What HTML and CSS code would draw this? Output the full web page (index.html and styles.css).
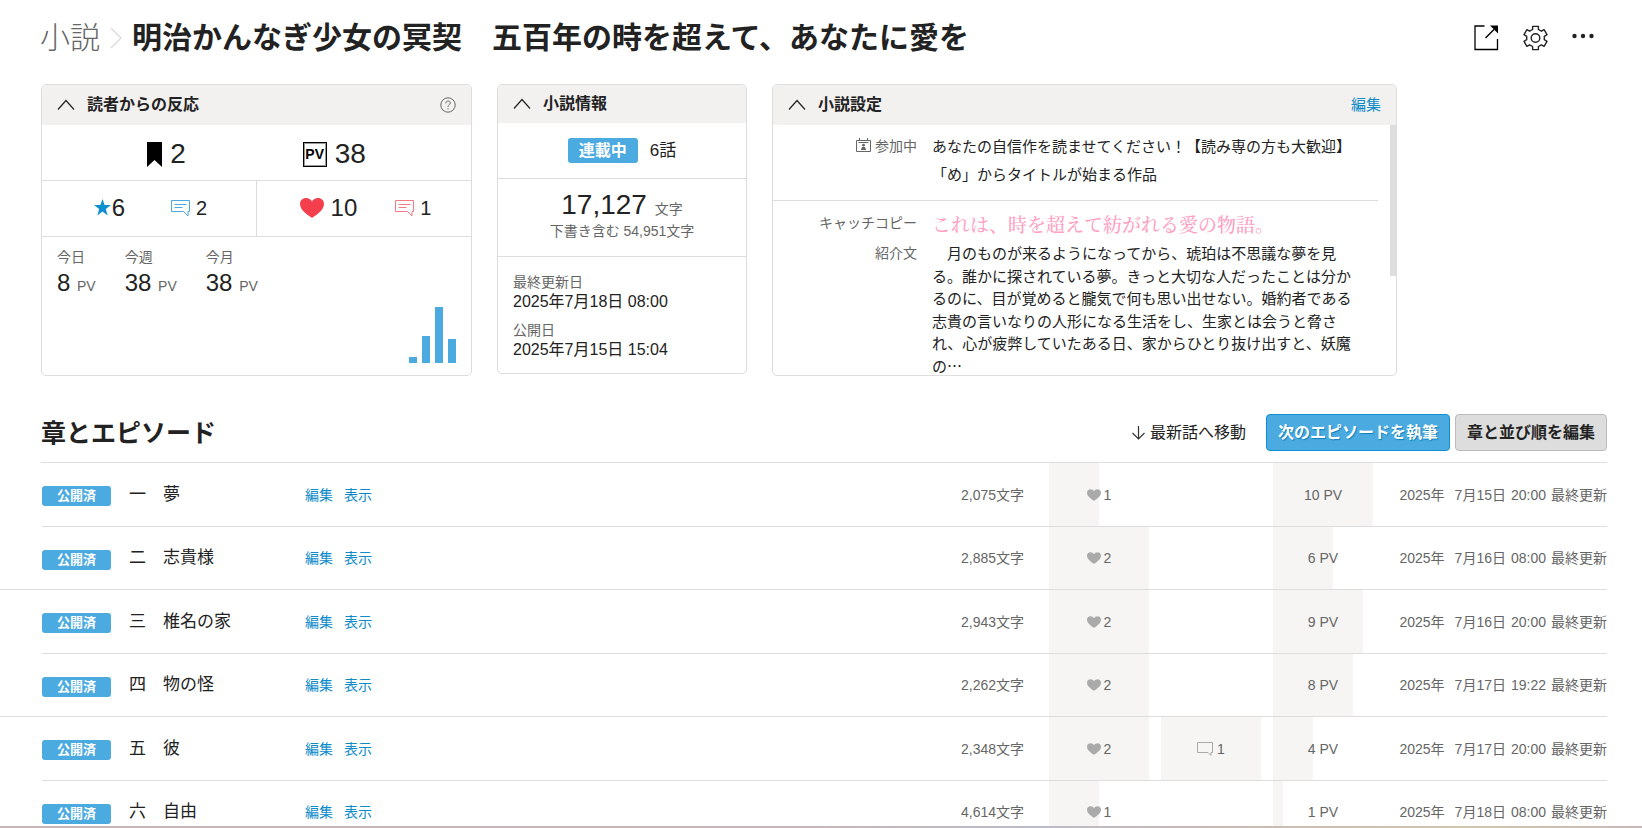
FILE: index.html
```html
<!DOCTYPE html>
<html lang="ja">
<head>
    <meta charset="UTF-8">
    <meta name="viewport" content="width=device-width, initial-scale=1.0">
    <title>明治かんなぎ少女の冥契　五百年の時を超えて、あなたに愛を</title>
    <link rel="stylesheet" href="styles.css">
</head>
<body>
    <svg class="sprite" aria-hidden="true">
        <symbol id="icon-up" viewBox="0 0 18 12">
            <path d="M1 10.5 9 1.5l8 9" fill="none" stroke="currentColor" stroke-width="1.2"/>
        </symbol>
        <symbol id="icon-comment" viewBox="0 0 20 18">
            <path d="M.5 1.5h18v11H17V17l-4.500-4.500H.5z" fill="none" stroke="currentColor"/>
            <path d="M3.500 5.500h12M3.500 8.500h8" stroke="currentColor"/>
        </symbol>
        <symbol id="icon-heart" viewBox="0 0 24 20">
            <path d="M12 20C8 17 0 12.500 0 6c0-3.500 2.500-6 6-6 2.500 0 5 1.200 6 3.500C13 1.200 15.500 0 18 0c3.500 0 6 2.500 6 6 0 6.500-8 11-12 14z" fill="currentColor"/>
        </symbol>
    </svg>

    <div class="page">
        <header class="page-header">
            <nav class="breadcrumb">
                <a class="breadcrumb-parent" href="#">小説</a>
                <svg class="breadcrumb-arrow" viewBox="0 0 12 22"><path d="M1 1l10 10L1 21" fill="none" stroke="currentColor" stroke-width="1.500"/></svg>
                <h1 class="work-title">明治かんなぎ少女の冥契　五百年の時を超えて、あなたに愛を</h1>
            </nav>
            <div class="header-actions">
                <button class="icon-button" type="button" aria-label="作品ページを開く">
                    <svg width="25" height="26" viewBox="0 0 25 26">
                        <path d="M10.500 1H1v23.500h22.500V14" fill="none" stroke="#000" stroke-width="1.300"/>
                        <path d="M11.500 13 20 4.500" stroke="#000" stroke-width="1.500"/>
                        <path d="M16 .5h8V8.500z" fill="#000"/>
                    </svg>
                </button>
                <button class="icon-button" type="button" aria-label="設定">
                    <svg width="25" height="26" viewBox="0 0 25 26" fill="none" stroke="#222" stroke-width="1.400">
                        <path d="M9.600 4.500V1.400h5.800v3.100l3 1.700 2.700-1.500 2.900 5-2.700 1.600v3.400l2.700 1.600-2.900 5-2.700-1.500-3 1.700v3.100H9.600v-3.100l-3-1.700-2.700 1.500-2.900-5 2.700-1.600v-3.400L1 9.700l2.900-5 2.700 1.500z" stroke-linejoin="round"/>
                        <circle cx="12.500" cy="13" r="4.300"/>
                    </svg>
                </button>
                <button class="icon-button" type="button" aria-label="メニュー">
                    <svg width="22" height="26" viewBox="0 0 22 26" fill="#222">
                        <circle cx="2.500" cy="11" r="2.200"/><circle cx="11" cy="11" r="2.200"/><circle cx="19.500" cy="11" r="2.200"/>
                    </svg>
                </button>
            </div>
        </header>

        <div class="cards">
            <section class="card card-reaction">
                <div class="card-header">
                    <svg class="card-toggle"><use href="#icon-up"/></svg>
                    <h2 class="card-title">読者からの反応</h2>
                    <svg class="help-icon" viewBox="0 0 16 16" fill="none" stroke="#666">
                        <circle cx="8" cy="8" r="7.200"/>
                        <path d="M5.800 6.300c0-3 4.500-3 4.500-.3 0 1.700-2.300 1.800-2.300 3.800M8 11.200v1.200"/>
                    </svg>
                </div>
                <div class="reaction-total">
                    <div class="stat stat-large">
                        <svg width="15" height="25" viewBox="0 0 15 25"><path d="M0 0h15v25l-7.500-7L0 25z"/></svg>
                        <span>2</span>
                    </div>
                    <div class="stat stat-large">
                        <span class="pv-icon">PV</span>
                        <span>38</span>
                    </div>
                </div>
                <div class="reaction-detail">
                    <div class="reaction-half">
                        <div class="stat stat-medium stat-star">
                            <svg width="17" height="17" viewBox="0 0 17 17"><path d="M8.500 0l2.100 6H17l-5.200 4 1.900 6.500-5.200-3.900-5.200 3.900L5.200 10 0 6h6.400z" fill="#0d90d0"/></svg>
                            <span>6</span>
                        </div>
                        <div class="stat stat-small">
                            <svg class="comment-blue" width="20" height="18"><use href="#icon-comment"/></svg>
                            <span>2</span>
                        </div>
                    </div>
                    <div class="reaction-half">
                        <div class="stat stat-medium">
                            <svg class="heart-red" width="24" height="20"><use href="#icon-heart"/></svg>
                            <span>10</span>
                        </div>
                        <div class="stat stat-small">
                            <svg class="comment-red" width="20" height="18"><use href="#icon-comment"/></svg>
                            <span>1</span>
                        </div>
                    </div>
                </div>
                <div class="reaction-pv">
                    <dl class="pv-list">
                        <div><dt>今日</dt><dd>8 <small>PV</small></dd></div>
                        <div><dt>今週</dt><dd>38 <small>PV</small></dd></div>
                        <div><dt>今月</dt><dd>38 <small>PV</small></dd></div>
                    </dl>
                    <div class="pv-chart">
                        <div style="height: 6px"></div>
                        <div style="height: 27px"></div>
                        <div style="height: 56px"></div>
                        <div style="height: 24px"></div>
                    </div>
                </div>
            </section>

            <section class="card card-info">
                <div class="card-header">
                    <svg class="card-toggle"><use href="#icon-up"/></svg>
                    <h2 class="card-title">小説情報</h2>
                </div>
                <div class="info-status">
                    <span class="status-badge">連載中</span>
                    <span>6話</span>
                </div>
                <div class="info-count">
                    <p class="count-main">17,127 <small>文字</small></p>
                    <p class="count-sub">下書き含む 54,951文字</p>
                </div>
                <dl class="info-dates">
                    <dt>最終更新日</dt>
                    <dd>2025年7月18日 08:00</dd>
                    <dt>公開日</dt>
                    <dd>2025年7月15日 15:04</dd>
                </dl>
            </section>

            <section class="card card-settings">
                <div class="card-header">
                    <svg class="card-toggle"><use href="#icon-up"/></svg>
                    <h2 class="card-title">小説設定</h2>
                    <a class="card-edit" href="#">編集</a>
                </div>
                <div class="settings-body">
                    <dl class="settings-group">
                        <dt>
                            <svg width="15" height="14" viewBox="0 0 15 14" fill="none" stroke="#666">
                                <path d="M.5 2.500h14v11H.5zM3.500 0v2.500M11.500 0v2.500M2.500 4.500h10"/>
                                <circle cx="7.500" cy="7.200" r="1.400" fill="#666" stroke="none"/>
                                <path d="M5 12c0-4.500 5-4.500 5 0z" fill="#666" stroke="none"/>
                            </svg>
                            参加中
                        </dt>
                        <dd class="contests">
                            <p>あなたの自信作を読ませてください！【読み専の方も大歓迎】</p>
                            <p>「め」からタイトルが始まる作品</p>
                        </dd>
                    </dl>
                    <dl class="settings-group settings-text">
                        <dt>キャッチコピー</dt>
                        <dd class="catchphrase">これは、時を超えて紡がれる愛の物語。</dd>
                        <dt>紹介文</dt>
                        <dd class="introduction">　月のものが来るようになってから、琥珀は不思議な夢を見る。誰かに探されている夢。きっと大切な人だったことは分かるのに、目が覚めると朧気で何も思い出せない。婚約者である志貴の言いなりの人形になる生活をし、生家とは会うと脅され、心が疲弊していたある日、家からひとり抜け出すと、妖魔の…</dd>
                    </dl>
                    <div class="scroll-thumb"></div>
                </div>
            </section>
        </div>

        <section class="episodes">
            <div class="episodes-header">
                <h2 class="episodes-title">章とエピソード</h2>
                <a class="jump-link" href="#latest">
                    <svg width="13" height="14" viewBox="0 0 13 14" fill="none" stroke="#333" stroke-width="1.200"><path d="M6.500 0v13M.5 7l6 6 6-6"/></svg>
                    最新話へ移動
                </a>
                <button class="button button-primary" type="button">次のエピソードを執筆</button>
                <button class="button" type="button">章と並び順を編集</button>
            </div>
            <ol class="episode-list">
                <li class="episode">
                    <span class="episode-status">公開済</span>
                    <span class="episode-title">一　夢</span>
                    <a href="#">編集</a>
                    <a href="#">表示</a>
                    <span class="episode-length">2,075文字</span>
                    <span class="meter"><i style="width: 50%"></i><svg class="heart-gray"><use href="#icon-heart"/></svg>1</span>
                    <span class="meter"></span>
                    <span class="meter"><i style="width: 100%"></i>10 PV</span>
                    <time class="episode-date"><span class="year">2025年</span><span>7月15日</span><span>20:00</span><span>最終更新</span></time>
                </li>
                <li class="episode">
                    <span class="episode-status">公開済</span>
                    <span class="episode-title">二　志貴様</span>
                    <a href="#">編集</a>
                    <a href="#">表示</a>
                    <span class="episode-length">2,885文字</span>
                    <span class="meter"><i style="width: 100%"></i><svg class="heart-gray"><use href="#icon-heart"/></svg>2</span>
                    <span class="meter"></span>
                    <span class="meter"><i style="width: 60%"></i>6 PV</span>
                    <time class="episode-date"><span class="year">2025年</span><span>7月16日</span><span>08:00</span><span>最終更新</span></time>
                </li>
                <li class="episode">
                    <span class="episode-status">公開済</span>
                    <span class="episode-title">三　椎名の家</span>
                    <a href="#">編集</a>
                    <a href="#">表示</a>
                    <span class="episode-length">2,943文字</span>
                    <span class="meter"><i style="width: 100%"></i><svg class="heart-gray"><use href="#icon-heart"/></svg>2</span>
                    <span class="meter"></span>
                    <span class="meter"><i style="width: 90%"></i>9 PV</span>
                    <time class="episode-date"><span class="year">2025年</span><span>7月16日</span><span>20:00</span><span>最終更新</span></time>
                </li>
                <li class="episode">
                    <span class="episode-status">公開済</span>
                    <span class="episode-title">四　物の怪</span>
                    <a href="#">編集</a>
                    <a href="#">表示</a>
                    <span class="episode-length">2,262文字</span>
                    <span class="meter"><i style="width: 100%"></i><svg class="heart-gray"><use href="#icon-heart"/></svg>2</span>
                    <span class="meter"></span>
                    <span class="meter"><i style="width: 80%"></i>8 PV</span>
                    <time class="episode-date"><span class="year">2025年</span><span>7月17日</span><span>19:22</span><span>最終更新</span></time>
                </li>
                <li class="episode">
                    <span class="episode-status">公開済</span>
                    <span class="episode-title">五　彼</span>
                    <a href="#">編集</a>
                    <a href="#">表示</a>
                    <span class="episode-length">2,348文字</span>
                    <span class="meter"><i style="width: 100%"></i><svg class="heart-gray"><use href="#icon-heart"/></svg>2</span>
                    <span class="meter"><i style="width: 100%"></i><svg class="comment-gray" viewBox="0 0 17 14"><path d="M.5.500h15v10H14v3L11 10.500H.5z" fill="none" stroke="currentColor"/></svg>1</span>
                    <span class="meter"><i style="width: 40%"></i>4 PV</span>
                    <time class="episode-date"><span class="year">2025年</span><span>7月17日</span><span>20:00</span><span>最終更新</span></time>
                </li>
                <li class="episode" id="latest">
                    <span class="episode-status">公開済</span>
                    <span class="episode-title">六　自由</span>
                    <a href="#">編集</a>
                    <a href="#">表示</a>
                    <span class="episode-length">4,614文字</span>
                    <span class="meter"><i style="width: 50%"></i><svg class="heart-gray"><use href="#icon-heart"/></svg>1</span>
                    <span class="meter"></span>
                    <span class="meter"><i style="width: 10%"></i>1 PV</span>
                    <time class="episode-date"><span class="year">2025年</span><span>7月18日</span><span>08:00</span><span>最終更新</span></time>
                </li>
            </ol>
        </section>
    </div>
    <div class="bottom-edge"></div>
</body>
</html>
```
FILE: styles.css
```css
* {
    margin: 0;
    padding: 0;
    box-sizing: border-box;
}

body {
    display: flex;
    flex-direction: column;
    height: 100vh;
    overflow: hidden;
    font-family: "Liberation Sans", "Noto Sans CJK JP", sans-serif;
    font-size: 16px;
    line-height: 20px;
    color: #222;
    background: #fff;
}

a {
    color: #0d8bc9;
    text-decoration: none;
}

button {
    font: inherit;
    cursor: pointer;
}

svg {
    display: block;
    flex-shrink: 0;
}

.sprite {
    position: absolute;
    width: 0;
    height: 0;
}

.page {
    flex: 1;
    min-height: 0;
    overflow: hidden;
}

/* Header */
.page-header {
    display: flex;
    justify-content: space-between;
    align-items: flex-start;
    padding: 18px 48px 26px 40px;
}

.breadcrumb {
    display: flex;
    align-items: center;
    font-size: 30px;
    line-height: 40px;
}

.breadcrumb-parent {
    color: #666;
    font-weight: 300;
}

.breadcrumb-arrow {
    width: 12px;
    height: 22px;
    margin: 0 10px;
    color: #ddd;
}

.work-title {
    font-size: 30px;
    font-weight: bold;
}

.header-actions {
    display: flex;
    gap: 24px;
    padding-top: 7px;
}

.icon-button {
    border: none;
    background: none;
}

/* Cards */
.cards {
    display: flex;
    align-items: flex-start;
    gap: 25px;
    padding-left: 41px;
}

.card {
    border: 1px solid #ddd;
    border-radius: 5px;
    overflow: hidden;
}

.card-reaction {
    width: 431px;
}

.card-info {
    width: 250px;
}

.card-settings {
    width: 625px;
}

.card-header {
    display: flex;
    align-items: center;
    height: 40px;
    padding: 0 15px;
    background: #f2f1f0;
}

.card-info .card-header {
    height: 38px;
}

.card-toggle {
    width: 18px;
    height: 12px;
    margin-right: 12px;
}

.card-title {
    flex: 1;
    font-size: 16px;
}

.card-edit {
    font-size: 15px;
}

.help-icon {
    width: 16px;
    height: 16px;
}

.stat {
    display: flex;
    align-items: center;
}

.stat-large {
    gap: 8px;
    font-size: 28px;
}

.stat-medium {
    gap: 7px;
    font-size: 24px;
}

.stat-small {
    gap: 5px;
    font-size: 20px;
}

.stat-star {
    gap: 1px;
}

.pv-icon {
    width: 24px;
    height: 25px;
    border: 1px solid #000;
    box-shadow: inset 0 0 0 1px #999;
    font-size: 14px;
    font-weight: bold;
    line-height: 23px;
    text-align: center;
    color: #000;
}

.comment-blue {
    color: #4baae0;
}

.comment-red {
    color: #f77a80;
}

.heart-red {
    color: #f4404c;
}

.reaction-total {
    display: flex;
    justify-content: center;
    align-items: center;
    gap: 117px;
    height: 56px;
    padding-top: 3px;
    border-bottom: 1px solid #ddd;
}

.reaction-detail {
    display: flex;
    height: 56px;
    border-bottom: 1px solid #ddd;
}

.reaction-half {
    flex: 1;
    display: flex;
    justify-content: center;
    align-items: center;
    gap: 46px;
    padding: 0 0 2px 3px;
}

.reaction-half + .reaction-half {
    gap: 38px;
    border-left: 1px solid #ddd;
}

.reaction-pv {
    padding: 10px 15px 12px;
}

.pv-list {
    display: flex;
    gap: 29px;
}

.pv-list dt {
    font-size: 14px;
    color: #666;
}

.pv-list dd {
    font-size: 24px;
    line-height: 32px;
}

.pv-list small {
    font-size: 14px;
    line-height: 14px;
    color: #666;
}

.pv-chart {
    display: flex;
    justify-content: flex-end;
    align-items: flex-end;
    gap: 5px;
    height: 64px;
}

.pv-chart div {
    width: 8px;
    background: #4baae0;
}

.info-status {
    display: flex;
    justify-content: center;
    align-items: center;
    gap: 12px;
    height: 56px;
    border-bottom: 1px solid #ddd;
    font-size: 17px;
}

.status-badge {
    padding: 0 11px;
    border-radius: 3px;
    font-size: 16px;
    font-weight: bold;
    line-height: 25px;
    color: #fff;
    background: #4baae0;
}

.info-count {
    padding: 10px 0 15px;
    border-bottom: 1px solid #ddd;
    text-align: center;
}

.count-main {
    font-size: 28px;
    line-height: 32px;
}

.count-main small,
.count-sub {
    font-size: 14px;
    color: #666;
}

.count-main small {
    line-height: 14px;
}

.info-dates {
    padding: 15px 15px 13px;
}

.info-dates dt {
    font-size: 14px;
    color: #666;
}

.info-dates dd + dt {
    margin-top: 8px;
}

.settings-body {
    position: relative;
    height: 250px;
    padding-right: 18px;
    overflow: hidden;
}

.settings-group {
    display: grid;
    grid-template-columns: 144px 425px;
    column-gap: 15px;
    padding: 8px 0 11px;
    border-bottom: 1px solid #ddd;
}

.settings-group dt {
    display: flex;
    justify-content: flex-end;
    align-items: flex-start;
    gap: 4px;
    font-size: 14px;
    line-height: 26px;
    color: #666;
}

.settings-group dt svg {
    margin-top: 5px;
}

.settings-group dd {
    font-size: 15px;
    line-height: 28px;
}

.settings-text {
    row-gap: 4px;
    padding-top: 9px;
}

.settings-text dt:last-of-type {
    line-height: 22px;
}

.settings-group .catchphrase {
    font-family: "Noto Serif CJK JP", "Noto Sans CJK JP", serif;
    font-size: 19px;
    font-weight: 500;
    color: #ffa0c2;
}

.settings-group .introduction {
    font-family: "Noto Sans CJK JP", sans-serif;
    line-height: 1.5;
}

.scroll-thumb {
    position: absolute;
    top: 0;
    right: 0;
    width: 6px;
    height: 151px;
    background: #ddd;
}

/* Episodes */
.episodes {
    padding: 38px 35px 0 0;
}

.episodes-header {
    display: flex;
    align-items: center;
    margin-left: 41px;
    padding-bottom: 11px;
    border-bottom: 1px solid #ddd;
}

.episodes-title {
    flex: 1;
    font-size: 25px;
}

.jump-link {
    display: flex;
    align-items: center;
    gap: 5px;
    margin-right: 20px;
    color: #222;
}

.button {
    height: 37px;
    margin-left: 5px;
    padding: 0 11px;
    border: 1px solid #bbb;
    border-radius: 4px;
    font-weight: bold;
    color: #222;
    background: #ddd;
}

.button-primary {
    margin-left: 0;
    border-color: #0d90d0;
    color: #fff;
    background: #4baae0;
    text-shadow: 1px 1px 1px #0d80b8;
}

.episode-list {
    list-style: none;
}

.episode {
    display: flex;
    align-items: center;
    height: 64px;
    margin-left: 42px;
    border-bottom: 1px solid #ddd;
    font-size: 14px;
    color: #666;
}

/* every second divider runs out to the window edge */
.episode:nth-child(even) {
    height: 63px;
    margin-left: 0;
    padding-left: 42px;
}

.episode-status {
    width: 69px;
    margin: 3px 18px 0 0;
    border-radius: 3px;
    font-size: 13px;
    font-weight: bold;
    text-align: center;
    color: #fff;
    background: #4baae0;
}

.episode-title {
    width: 176px;
    font-size: 17px;
    color: #222;
}

.episode a {
    margin-right: 11px;
}

.episode-length {
    flex: 1;
    margin-right: 13px;
    text-align: right;
}

.meter {
    position: relative;
    display: flex;
    justify-content: center;
    align-items: center;
    gap: 3px;
    width: 100px;
    height: 100%;
    margin-left: 12px;
    z-index: 0;
}

.meter i {
    position: absolute;
    top: 0;
    bottom: 0;
    left: 0;
    z-index: -1;
    background: #f6f5f4;
}

.heart-gray {
    width: 14px;
    height: 12px;
    color: #aaa;
}

.comment-gray {
    width: 17px;
    height: 14px;
    color: #aaa;
}

.episode-date {
    display: flex;
    justify-content: flex-end;
    gap: 5px;
    width: 234px;
}

.episode-date .year {
    margin-right: 5px;
}

.bottom-edge {
    height: 2px;
    background: linear-gradient(to right, #c8b6b6, #c8b6b8 50%, #bbbcca 63%, #c8b8b6 72%, #d2c6ac 90%, #c8b8b6);
}
```
